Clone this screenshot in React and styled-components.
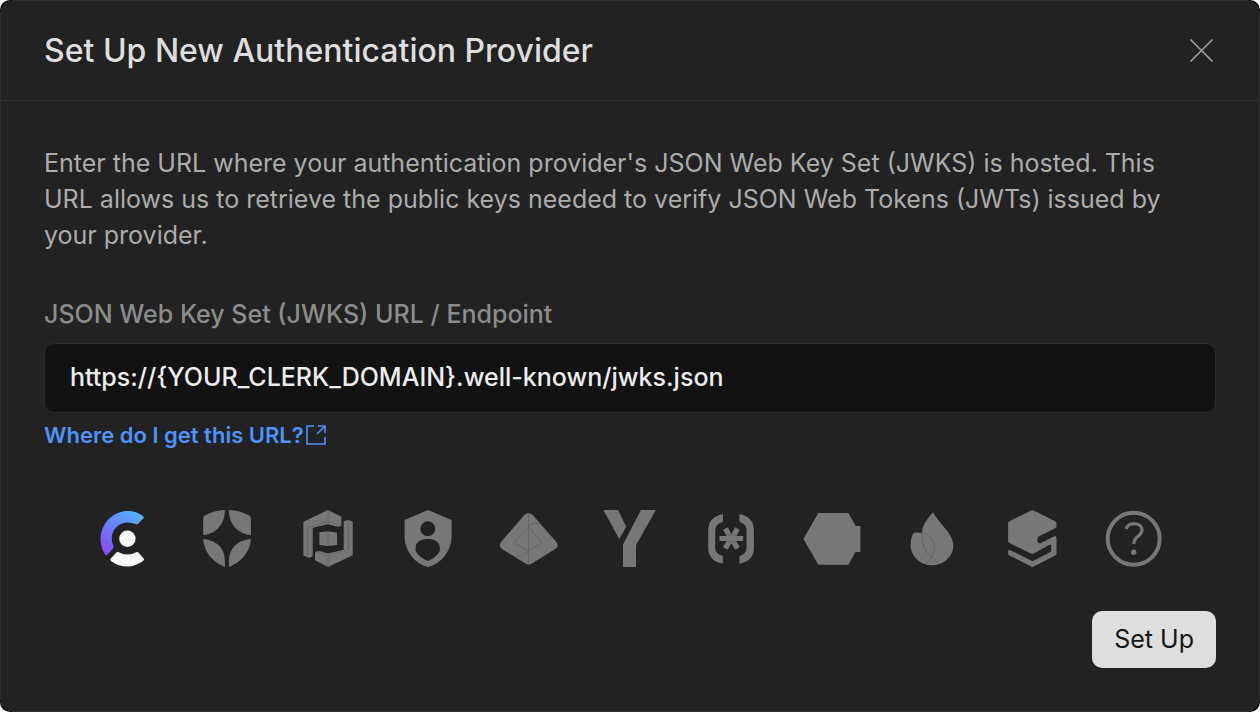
import React, { useState } from "react";
import styled, { createGlobalStyle } from "styled-components";

const GlobalStyle = createGlobalStyle`
  *, *::before, *::after { box-sizing: border-box; }
  body {
    margin: 0;
    background: #fff;
    font-family: Inter, "Liberation Sans", sans-serif;
  }
  button, input { font: inherit; }
`;

const Backdrop = styled.div`
  display: flex;
  min-height: 100vh;
  background: #000;
  border-radius: 10px;
`;

const Dialog = styled.section`
  flex: 1;
  min-width: 0;
  display: flex;
  flex-direction: column;
  background: #222;
  border: 1px solid #2e2e2e;
  border-radius: 14px;
`;

const Header = styled.header`
  display: flex;
  align-items: center;
  justify-content: space-between;
  padding: 30px 43px 29px;
  border-bottom: 1px solid #2e2e2e;
`;

const Title = styled.h1`
  margin: 0;
  font-size: 32px;
  line-height: 40px;
  font-weight: 500;
  color: #dedede;
`;

const CloseButton = styled.button`
  display: flex;
  padding: 0;
  border: 0;
  background: none;
  color: #a0a0a0;
  cursor: pointer;
`;

const Form = styled.form`
  display: flex;
  flex-direction: column;
  padding: 44px 43px 43px;
`;

const Description = styled.p`
  margin: 0 0 45px;
  padding-right: 20px;
  font-size: 25px;
  line-height: 36px;
  color: #acacac;
`;

const Label = styled.label`
  margin-bottom: 13px;
  font-size: 25px;
  line-height: 32px;
  font-weight: 500;
  color: #8c8c8c;
`;

const UrlInput = styled.input`
  width: 100%;
  height: 70px;
  padding: 0 25px 2px;
  border: 1px solid #2c2c2c;
  border-radius: 10px;
  background: #121212;
  color: #ededed;
  font-size: 25px;
  font-weight: 500;
  outline: none;
`;

const HelpLink = styled.a`
  display: flex;
  align-items: center;
  align-self: flex-start;
  gap: 2px;
  margin: 8px 0 60px;
  font-size: 22px;
  line-height: 28px;
  font-weight: 600;
  color: #4d93fa;
  text-decoration: none;
`;

const Providers = styled.div`
  display: flex;
  justify-content: space-between;
  padding: 0 52px;
  margin-bottom: 42px;
`;

const ProviderButton = styled.button`
  display: flex;
  padding: 0;
  border: 0;
  background: none;
  color: #777;
  cursor: pointer;
`;

const SubmitButton = styled.button`
  align-self: flex-end;
  height: 57px;
  padding: 0 22px 2px;
  border: 0;
  border-radius: 10px;
  background: #dedede;
  color: #161616;
  font-size: 25px;
  cursor: pointer;
`;

const Seam = styled.path`
  fill: none;
  stroke: #5c5c5c;
  stroke-width: 0.7;
`;

const providers = [
  {
    name: "Clerk",
    art: (
      <>
        <defs>
          <linearGradient id="clerk" x1="40" y1="5" x2="8" y2="46" gradientUnits="userSpaceOnUse">
            <stop offset="0" stopColor="#56adf8" />
            <stop offset="0.5" stopColor="#6c7df8" />
            <stop offset="1" stopColor="#8a45f5" />
          </linearGradient>
        </defs>
        <path
          fill="url(#clerk)"
          d="M47 6.9Q48.6 8 47.3 9.4L42.2 14.8Q41.2 15.8 39.7 15Q36 13.5 31.5 13.5A16 16 0 0 0 15.7 29.7Q15.7 33.6 17.4 36.8Q18.1 38.2 17.1 39.3L11.7 45.2Q10.2 46.8 9.1 45.4A28 28 0 0 1 31.5 2Q40.2 2 47 6.9Z"
        />
        <circle cx="31.4" cy="29.7" r="8.2" fill="#fafafa" />
        <path
          fill="#fafafa"
          d="M14.8 49.6L20.4 43.6Q21.4 42.6 22.8 43.3Q26.8 45.6 31.4 45.6T40 43.3Q41.4 42.6 42.4 43.6L47.6 49.4Q48.6 50.8 47.2 51.8Q40 57.6 31.4 57.6T15.2 52.2Q13.6 51 14.8 49.6Z"
        />
      </>
    ),
  },
  {
    name: "Auth0",
    art: (
      <>
        <path d="M6.2 9.4Q6.2 7.2 8.2 6.3Q17 1.6 27.9 1C28.2 13 21 24.8 6.2 26Z" />
        <path d="M53.9 9.4Q53.9 7.2 51.9 6.3Q43 1.6 31.9 1C31.7 13 39 24.8 53.9 26Z" />
        <path d="M6.2 30C20 31 27.9 40 27.9 51.5V58C15 53 6.8 42 6.2 30Z" />
        <path d="M53.9 30C40 31 31.9 40 31.9 51.5V58C45 53 53.3 42 53.9 30Z" />
      </>
    ),
  },
  {
    name: "PropelAuth",
    art: (
      <>
        <path d="M5.4 12.7L30 1L43.4 7.7V17L39.2 17.8L30 15.3L14.7 18.7V47.4L10.6 48.7L5.4 46.4Z" />
        <path d="M45.7 12.2L50.4 11L54.7 12.7V46.3L30 58L17 51.3V42.9L21.4 42L30 44.4L45.7 40.7Z" />
        <path d="M21.4 23.3L30 22.3L39 23.7V36L30 37L21.4 35.9Z" />
        <Seam d="M30 1.5V12.5M9.7 19V48M30 22.5V37M50.4 11V40.5M30 47.5V57.5" />
        <Seam strokeDasharray="2 1" d="M9.7 18.5L30 12.7L43.2 16.2M17.3 43.2L30 46.6L50.4 40.8" />
      </>
    ),
  },
  {
    name: "SuperTokens",
    art: (
      <path
        fillRule="evenodd"
        d="M30 1L53.6 11V27C53.6 42 43 55 30 58C17 55 6.6 42 6.6 27V11ZM29.8 12.3A7.4 7.4 0 1 0 29.8 27.1A7.4 7.4 0 1 0 29.8 12.3ZM17.6 38.5C17.6 32.5 24 30 29.8 30S41.8 32.5 41.8 38.5V42Q39 48 29.8 52Q20.5 48 17.6 42Z"
      />
    ),
  },
  {
    name: "Microsoft Entra",
    art: (
      <>
        <path d="M25.8 5.6Q29.5 2.2 33.3 5.6L57.6 33.2Q60 37 56.6 39.8L33 54.5Q29.8 56.5 26.5 54.5L2.6 39.8Q-.6 37 1.8 33.2Z" />
        <Seam d="M29.5 4V55" />
        <Seam d="M29.5 17.7L43 33.7L29.5 42L14.8 33.7ZM29.5 17.7L33 14.5Q34 14 41 14.7M29.5 42L22.5 46.8Q21 47.8 16.8 47.7" />
      </>
    ),
  },
  {
    name: "Yubico",
    art: (
      <>
        <path d="M3.3 1H18L26.3 17.7L19.3 30Z" />
        <path d="M41 1H55.8L36 36.3V58H23V35.5Z" />
      </>
    ),
  },
  {
    name: "Custom JWT",
    art: (
      <>
        <path d="M21.9 5V12.7Q14.2 15 14.2 21V39Q14.2 45 21.9 47V54.7Q7.2 52 7.2 38.5V21.5Q7.2 8 21.9 5Z" />
        <path d="M38.5 5V12.7Q45.5 15 45.5 21V39Q45.5 45 38.5 47V54.7Q52.9 52 52.9 38.5V21.5Q52.9 8 38.5 5Z" />
        <path
          fill="none"
          stroke="currentColor"
          strokeWidth="5.2"
          d="M24.4 19.4L29.8 29.4M36.4 19.4L31 29.4M30.2 29.6L24.2 39.4M30.6 29.6L36.6 39.4M18.5 29.5H42.2"
        />
        <Seam d="M25 26.2L34 25.6M26 32.6H35" />
      </>
    ),
  },
  {
    name: "Hexa",
    art: <path d="M1.4 30L16.4 4H46.4L53.7 17H58.4V43H53.4L46.4 55.7H16.4Z" />,
  },
  {
    name: "Ember",
    art: (
      <>
        <path d="M31 3.3C38 16 51.3 24.5 51.3 36.5C51.3 48 41 56.3 30 56.3C18 56.3 8.6 47 8.6 36Q8.6 29.5 10.7 25.2Q11.4 23.6 13.6 23.5L20 23.7C20.4 15 26 9.5 31 3.3Z" />
        <Seam d="M20 23.7C20 35 22.5 42.5 30 48.7Q33 52 39.3 55M20 23.7C28 25.5 32.3 31 32.3 37.7C32.3 45 28.5 50.5 24 54.8" />
      </>
    ),
  },
  {
    name: "Stytch",
    art: (
      <path d="M27.8 1.7Q29.5.6 31.2 1.7L52.2 12.2Q53.5 13 53.5 14.4V17.2Q53.5 18.6 52.2 19.2L36 27.3Q34.3 28.2 34.3 30V32Q34.5 34.8 37.6 34.3L50.8 27.6Q53.5 26.4 53.5 29V44.8Q53.5 46 52.2 46.6L31.2 57.2Q29.5 58.2 27.8 57.2L6.5 46.6Q5.1 46 5.1 44.5V42.2Q5.2 40.6 7.2 41.2L29.5 52.3L47.2 43.3Q48.3 42.6 48.3 41.2V37.2Q48.1 35.2 46.2 36L31.2 44.2Q29.5 45.2 27.8 44.4L6.5 34.1Q5.1 33.3 5.1 32V14.2Q5.1 12.9 6.5 12.2Z" />
    ),
  },
  {
    name: "Other",
    art: (
      <>
        <circle cx="29.7" cy="29.7" r="26" fill="none" stroke="currentColor" strokeWidth="4" />
        <path
          fill="none"
          stroke="currentColor"
          strokeWidth="3.2"
          d="M22.3 20C23.3 16.3 26.4 14.6 30 14.6C34.6 14.6 38 17.1 38 21C38 27.5 30 26.5 29.7 35"
        />
        <circle cx="29.7" cy="43.3" r="2.7" />
      </>
    ),
  },
];

export default function App() {
  const [url, setUrl] = useState("https://{YOUR_CLERK_DOMAIN}.well-known/jwks.json");
  const [selected, setSelected] = useState("Clerk");

  return (
    <>
      <GlobalStyle />
      <Backdrop>
        <Dialog role="dialog" aria-labelledby="dialog-title">
          <Header>
            <Title id="dialog-title">Set Up New Authentication Provider</Title>
            <CloseButton type="button" aria-label="Close">
              <svg width="30" height="30" viewBox="0 0 30 30" fill="none" stroke="currentColor" strokeWidth="1.7">
                <path d="M4.5 3.5L26.5 25.5M26.5 3.5L4.5 25.5" />
              </svg>
            </CloseButton>
          </Header>
          <Form onSubmit={(e) => e.preventDefault()}>
            <Description>
              Enter the URL where your authentication provider's JSON Web Key Set (JWKS) is hosted. This URL
              allows us to retrieve the public keys needed to verify JSON Web Tokens (JWTs) issued by your
              provider.
            </Description>
            <Label htmlFor="jwks-url">JSON Web Key Set (JWKS) URL / Endpoint</Label>
            <UrlInput id="jwks-url" type="text" value={url} onChange={(e) => setUrl(e.target.value)} />
            <HelpLink href="#help">
              Where do I get this URL?
              <svg width="20" height="20" viewBox="0 0 20 20" fill="none" stroke="currentColor" strokeWidth="1.6" aria-hidden="true">
                <path d="M8 1H1V19H19V12M12 1H19V8M19 1L11 9" />
              </svg>
            </HelpLink>
            <Providers>
              {providers.map(({ name, art }) => (
                <ProviderButton
                  key={name}
                  type="button"
                  aria-label={name}
                  aria-pressed={selected === name}
                  onClick={() => setSelected(name)}
                >
                  <svg width="60" height="60" viewBox="0 0 60 60" fill="currentColor" aria-hidden="true">
                    {art}
                  </svg>
                </ProviderButton>
              ))}
            </Providers>
            <SubmitButton type="submit">Set Up</SubmitButton>
          </Form>
        </Dialog>
      </Backdrop>
    </>
  );
}
